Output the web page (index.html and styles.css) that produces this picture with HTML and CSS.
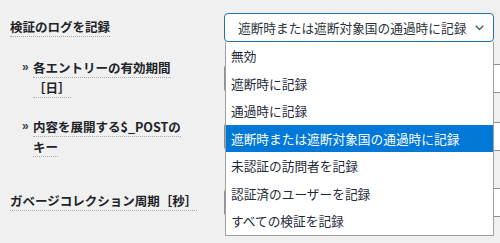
FILE: index.html
```html
<!DOCTYPE html>
<html lang="ja">
<head>
    <meta charset="UTF-8">
    <meta name="viewport" content="width=device-width, initial-scale=1.0">
    <title>検証のログ設定</title>
    <link rel="stylesheet" href="styles.css">
</head>
<body>
    <div id="settings">
        <div class="row row-log">
            <div class="label"><span class="tip">検証のログを記録</span></div>
            <div class="field">
                <div class="select-wrap">
                    <div class="select">
                        <span class="value">遮断時または遮断対象国の通過時に記録</span>
                        <svg class="chevron" width="9" height="6" viewBox="0 0 9 6"><polyline points="0.8,0.8 4.5,4.6 8.2,0.8" fill="none" stroke="#50575e" stroke-width="1.4"/></svg>
                    </div>
                    <ul class="dropdown">
                        <li>無効</li>
                        <li>遮断時に記録</li>
                        <li>通過時に記録</li>
                        <li class="selected">遮断時または遮断対象国の通過時に記録</li>
                        <li>未認証の訪問者を記録</li>
                        <li>認証済のユーザーを記録</li>
                        <li>すべての検証を記録</li>
                    </ul>
                </div>
            </div>
        </div>
        <div class="row row-expire">
            <div class="label sub"><span class="raquo">»</span><div class="text"><span class="tip">各エントリーの有効期間［日］</span></div></div>
            <div class="field"><div class="input"></div></div>
        </div>
        <div class="row row-post">
            <div class="label sub"><span class="raquo">»</span><div class="text"><span class="tip">内容を展開する$_POSTのキー</span></div></div>
            <div class="field"><div class="input"></div></div>
        </div>
        <div class="row row-gc">
            <div class="label"><span class="tip">ガベージコレクション周期［秒］</span></div>
            <div class="field"><div class="input"></div></div>
        </div>
    </div>
</body>
</html>
```
FILE: styles.css
```css
* {
    margin: 0;
    padding: 0;
    box-sizing: border-box;
}
html, body {
    width: 100%;
    height: 100%;
    overflow: hidden;
}
body {
    font-family: "Noto Sans CJK JP", "Noto Sans", sans-serif;
    background-color: #f0f0f1;
    color: #1d2327;
    padding: 13px 0 0 10px;
}
#settings {
    display: flex;
    flex-direction: column;
}
.row {
    display: flex;
    align-items: flex-start;
}
.row-expire {
    margin-top: 16px;
}
.row-post {
    margin-top: 19px;
}
.row-gc {
    margin-top: 31px;
}
.label {
    width: 214px;
    flex-shrink: 0;
    padding-right: 30px;
    font-size: 12.5px;
    font-weight: bold;
    line-height: 20px;
    line-break: strict;
}
.row-log .label {
    padding-top: 4px;
}
.row-gc .label {
    padding-top: 3px;
}
.label.sub {
    display: flex;
    padding-left: 12px;
}
.raquo {
    width: 11px;
    flex-shrink: 0;
    font-family: "Liberation Sans", sans-serif;
    font-size: 12px;
    color: #3c434a;
    line-height: 18px;
}
.tip {
    border-bottom: 1px dotted #a7aaad;
}
.field {
    flex: 1;
}
.input {
    width: 300px;
    height: 29px;
    background: #fff;
    border: 1px solid #8c8f94;
    border-radius: 4px;
}
.row-expire .input {
    margin-top: 6px;
}
.row-post .input {
    margin-top: 5px;
}
.select-wrap {
    position: relative;
    width: 270px;
}
.select {
    height: 29px;
    background: #fff;
    border: 1px solid #2271b1;
    border-radius: 4px;
    display: flex;
    align-items: center;
    justify-content: space-between;
    padding: 0 9px 0 13px;
    font-size: 12.7px;
    color: #2c3338;
}
.chevron {
    display: block;
}
.dropdown {
    position: absolute;
    top: 29px;
    left: 1px;
    width: 269px;
    list-style: none;
    background: #fff;
    border: 1px solid #a0a0a0;
    border-top: 0;
    z-index: 5;
}
.dropdown li {
    height: 27.5px;
    display: flex;
    align-items: center;
    padding-left: 5px;
    font-size: 12.7px;
    color: #1e2b38;
}
.dropdown li.selected {
    background-color: #0078d7;
    color: #fff;
}
```
